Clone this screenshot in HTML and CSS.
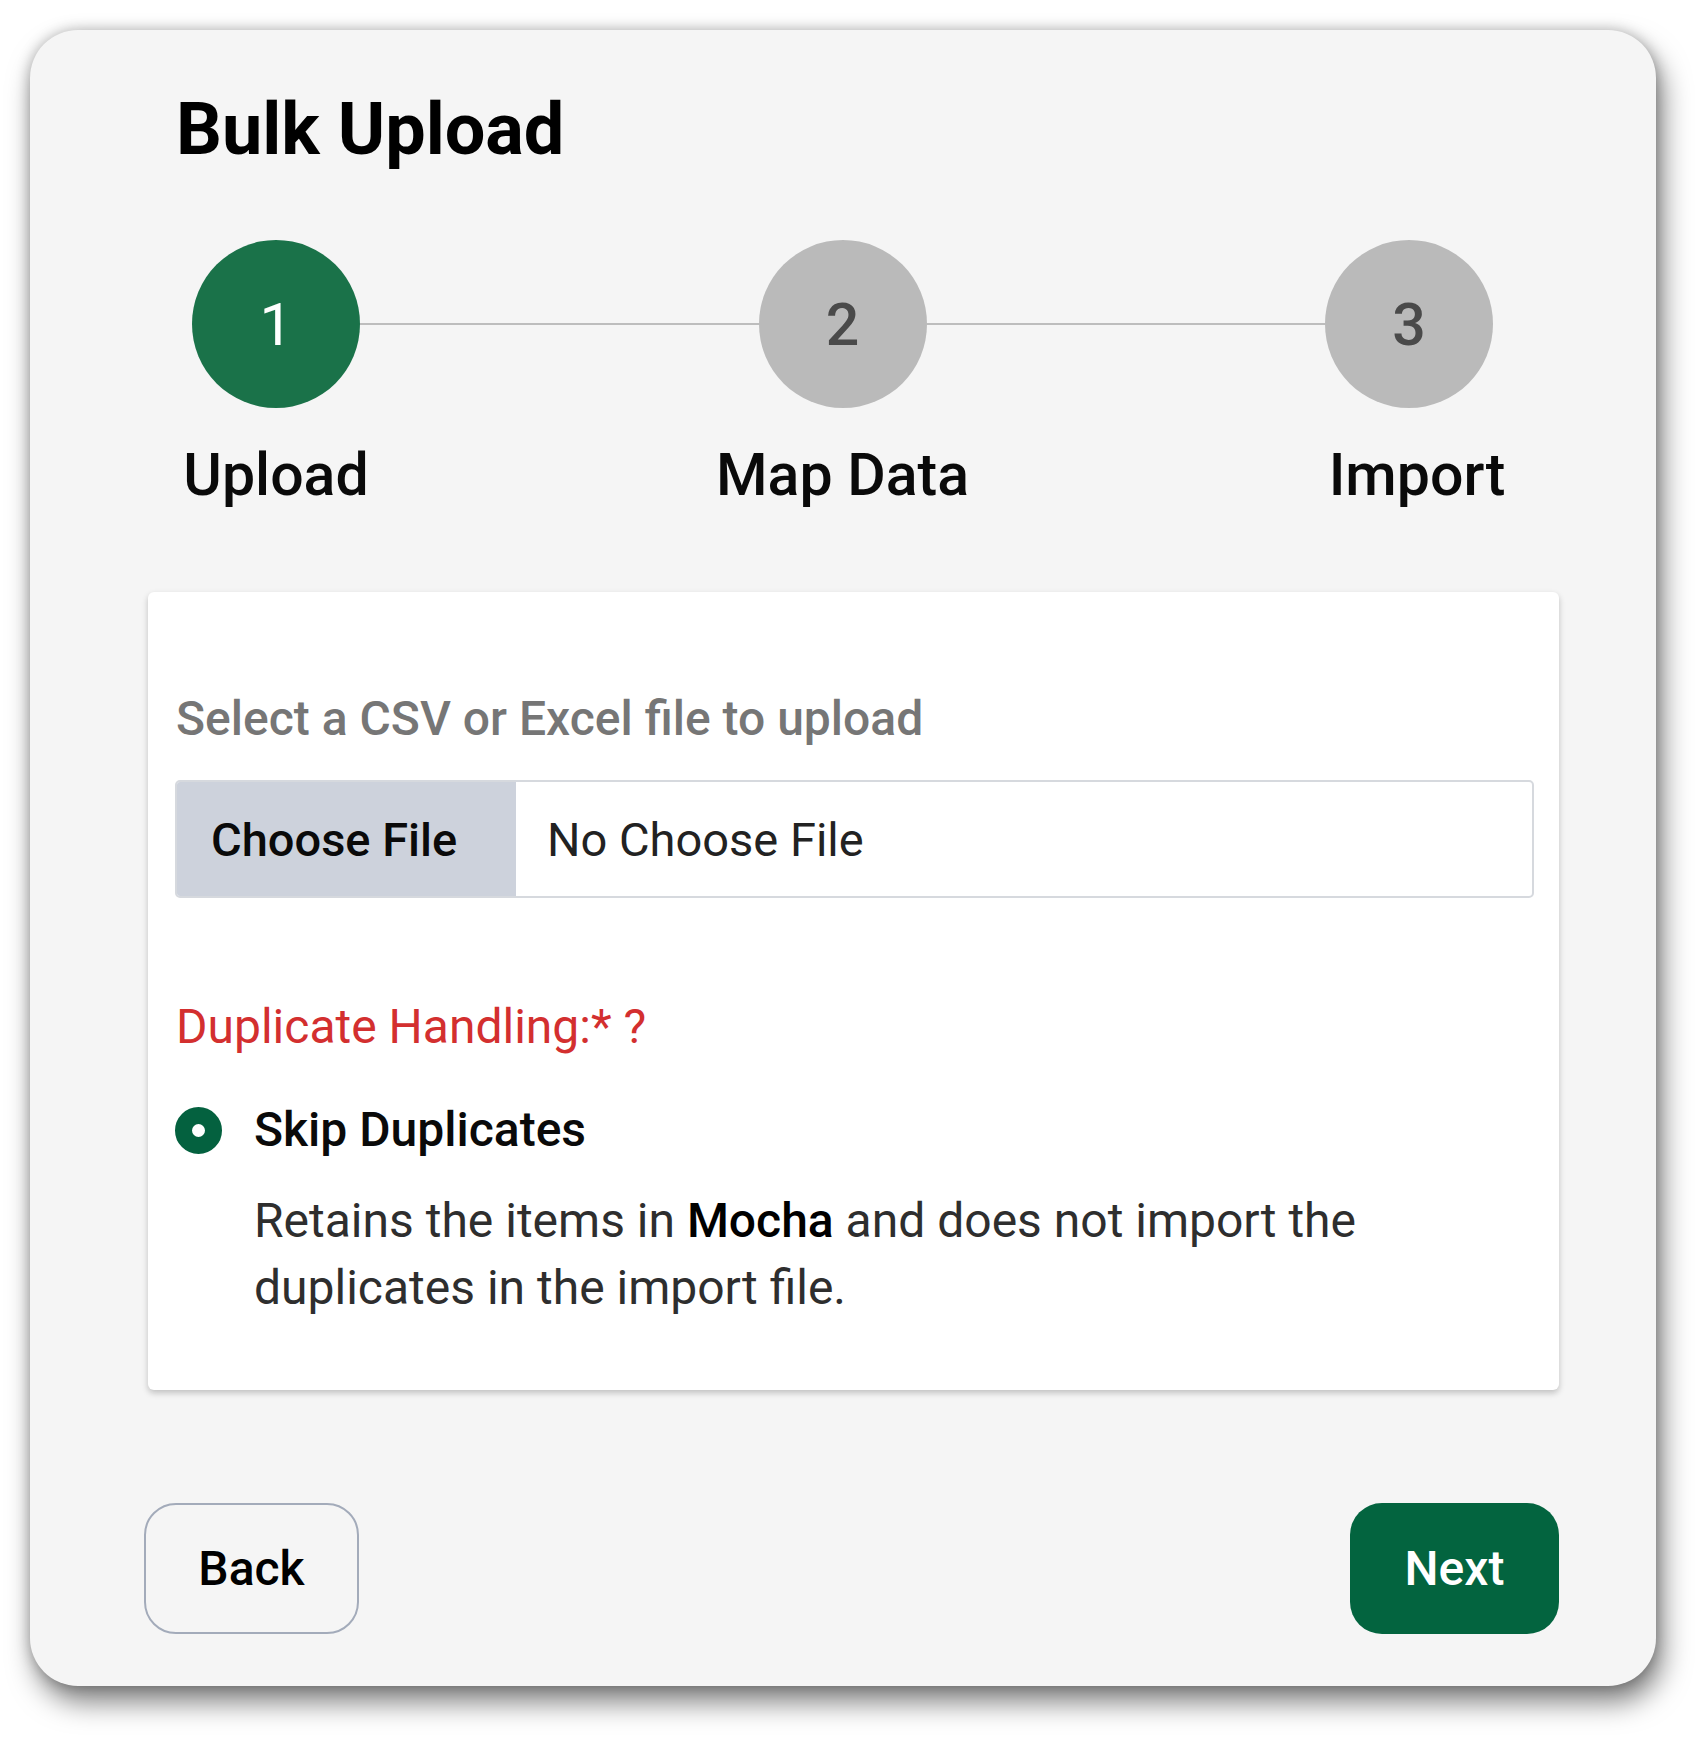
FILE: index.html
```html
<!DOCTYPE html>
<html lang="en">
<head>
<meta charset="utf-8">
<title>Bulk Upload</title>
<link rel="stylesheet" href="styles.css">
</head>
<body>
<div class="modal">
  <h1 class="title">Bulk Upload</h1>

  <div class="stepper">
    <div class="step">
      <div class="circle active">1</div>
      <div class="label">Upload</div>
    </div>
    <div class="connector"></div>
    <div class="step">
      <div class="circle">2</div>
      <div class="label">Map Data</div>
    </div>
    <div class="connector"></div>
    <div class="step">
      <div class="circle">3</div>
      <div class="label label-last">Import</div>
    </div>
  </div>

  <div class="panel">
    <div class="hint">Select a CSV or Excel file to upload</div>
    <div class="file-input">
      <span class="file-btn">Choose File</span>
      <span class="file-name">No Choose File</span>
    </div>

    <div class="dup-label">Duplicate Handling:* ?</div>
    <div class="option">
      <span class="radio"></span>
      <span class="option-text">Skip Duplicates</span>
    </div>
    <p class="desc"><span>Retains the items in </span><b>Mocha</b><span> and does not import the </span><span>duplicates in the import file.</span></p>
  </div>

  <div class="footer">
    <button class="btn btn-back">Back</button>
    <button class="btn btn-next">Next</button>
  </div>
</div>
</body>
</html>
```

FILE: styles.css
```css
* { box-sizing: border-box; }

html, body {
  margin: 0;
  padding: 0;
  background: #ffffff;
  font-family: Roboto, "Noto Sans", "Liberation Sans", sans-serif;
}

body {
  min-height: 1743px;
  padding-top: 30px;
  padding-left: 30px;
}

.modal {
  width: 1626px;
  height: 1656px;
  background: #f5f5f5;
  border-radius: 48px;
  box-shadow: 6px 16px 28px rgba(0, 0, 0, 0.5), 0 0 14px rgba(0, 0, 0, 0.25);
  padding: 54px 97px 0 118px;
  display: flex;
  flex-direction: column;
}

.title {
  margin: 0 0 0 28px;
  font-size: 72px;
  line-height: 91px;
  font-weight: 700;
  color: #000;
}

.stepper {
  margin: 65px 66px 0 44px;
  display: flex;
  align-items: flex-start;
}

.step {
  width: 168px;
  display: flex;
  flex-direction: column;
  align-items: center;
}

.circle {
  width: 168px;
  height: 168px;
  border-radius: 50%;
  background: #bababa;
  color: #4a4a4a;
  font-size: 59px;
  font-weight: 500;
  display: flex;
  align-items: center;
  justify-content: center;
}

.circle.active {
  background: #1a7249;
  color: #ffffff;
  font-weight: 400;
}

.label {
  margin-top: 32px;
  width: 320px;
  text-align: center;
  white-space: nowrap;
  font-size: 59px;
  line-height: 70px;
  font-weight: 500;
  color: #0a0a0a;
}

.label-last {
  margin-left: 16px;
}

.connector {
  flex: 1;
  height: 2px;
  margin-top: 83px;
  background: #bdbdbd;
}

.panel {
  margin-top: 82px;
  background: #ffffff;
  border-radius: 6px;
  box-shadow: 0 3px 6px rgba(0, 0, 0, 0.22);
  padding: 99px 25px 69px 27px;
}

.hint {
  margin-left: 1px;
  font-size: 48px;
  line-height: 56px;
  font-weight: 500;
  color: #767676;
}

.file-input {
  margin-top: 33px;
  height: 118px;
  display: flex;
  border: 2px solid #d6d9de;
  border-radius: 5px;
  overflow: hidden;
  font-size: 47px;
}

.file-btn {
  width: 339px;
  background: #cdd2dc;
  display: flex;
  align-items: center;
  padding-left: 34px;
  font-weight: 500;
  color: #0a0a0a;
}

.file-name {
  display: flex;
  align-items: center;
  padding-left: 31px;
  color: #222222;
}

.dup-label {
  margin-top: 101px;
  margin-left: 1px;
  font-size: 48px;
  line-height: 56px;
  color: #d32f2f;
}

.option {
  margin-top: 47px;
  display: flex;
  align-items: center;
  gap: 32px;
  height: 56px;
}

.radio {
  width: 47px;
  height: 47px;
  border-radius: 50%;
  border: 17px solid #04613f;
  background: #ffffff;
}

.option-text {
  font-size: 48px;
  line-height: 56px;
  font-weight: 500;
  color: #0a0a0a;
}

.desc {
  margin: 29px 0 0 79px;
  max-width: 1200px;
  font-size: 48px;
  line-height: 67px;
  color: #2e2e2e;
}

.desc b {
  font-weight: 500;
  color: #000;
}

.footer {
  margin: 113px 0 0 -4px;
  display: flex;
  justify-content: space-between;
}

.btn {
  height: 131px;
  border-radius: 32px;
  font-family: Roboto, "Noto Sans", "Liberation Sans", sans-serif;
  font-size: 48px;
  font-weight: 500;
  cursor: pointer;
}

.btn-back {
  width: 215px;
  background: transparent;
  border: 2px solid #a3abba;
  color: #000;
}

.btn-next {
  width: 209px;
  background: #03643f;
  border: none;
  color: #ffffff;
}
```
